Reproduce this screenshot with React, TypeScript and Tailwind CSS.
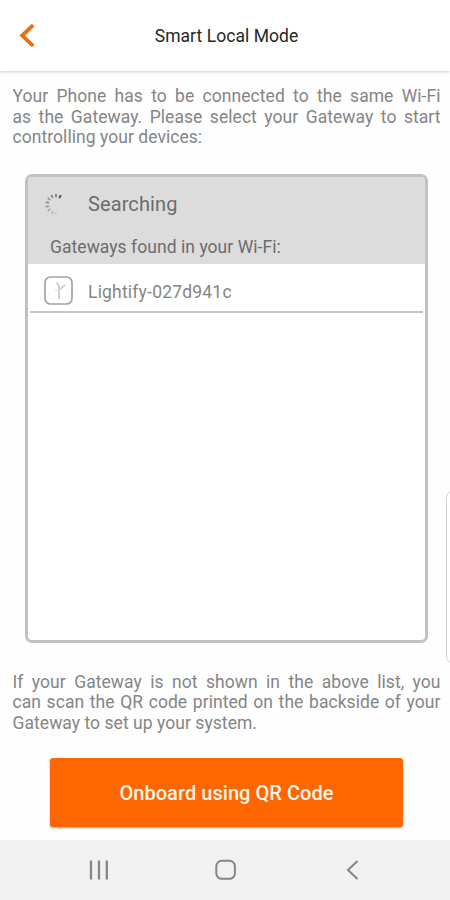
const ticks = [
  { angle: 180, color: '#cfcfcf' },
  { angle: 205, color: '#bdbdbd' },
  { angle: 232, color: '#a8a8a8' },
  { angle: 257, color: '#9c9c9c' },
  { angle: 283, color: '#8e8e8e' },
  { angle: 308, color: '#989898' },
  { angle: 334, color: '#848484' },
  { angle: 0, color: '#787878' },
  { angle: 27, color: '#404040' },
];

const introLines = [
  'Your Phone has to be connected to the same Wi-Fi',
  'as the Gateway. Please select your Gateway to start',
  'controlling your devices:',
];

const helpLines = [
  'If your Gateway is not shown in the above list, you',
  'can scan the QR code printed on the backside of your',
  'Gateway to set up your system.',
];

function Header() {
  return (
    <header className="flex h-[71px] shrink-0 items-center bg-white shadow-[0_1px_3px_rgba(0,0,0,0.2)]">
      <button aria-label="Back" className="ml-[18px] w-[18px]">
        <svg width="18" height="28" viewBox="0 0 18 28" fill="none">
          <path d="M15.2 3.2 4.2 13.5l11 10.5" stroke="#f26a0a" strokeWidth="3.8" />
        </svg>
      </button>
      <h1 className="mr-9 flex-1 pl-[3px] pt-px text-center text-[17.5px] tracking-[0.05px] text-[#262626]">Smart Local Mode</h1>
    </header>
  );
}

function Paragraph({ lines }: { lines: string[] }) {
  return (
    <p className="ml-[12.5px] w-[428px] text-[17.5px] leading-[20.5px] tracking-[0.05px] text-[#858585]">
      {lines.map((line, i) => (
        <span
          key={line}
          className={`block whitespace-nowrap text-justify ${i < lines.length - 1 ? '[text-align-last:justify]' : ''}`}
        >
          {line}
        </span>
      ))}
    </p>
  );
}

function Spinner() {
  return (
    <svg width="28" height="28" viewBox="-14 -14.5 28 28">
      {ticks.map((tick) => (
        <path
          key={tick.angle}
          d="M0-10.5v3.2"
          stroke={tick.color}
          strokeWidth="1.7"
          transform={`rotate(${tick.angle})`}
        />
      ))}
    </svg>
  );
}

function GatewayIcon() {
  return (
    <svg width="29" height="29" viewBox="0 0 29 29" fill="none">
      <rect x="1" y="1" width="27" height="27" rx="5.5" fill="#fff" stroke="#a3a3a3" strokeWidth="1.7" />
      <path d="M12.5 6.5 15 10v13M21 9l-6 5" stroke="#cfcfcf" strokeWidth="2" />
      <path d="M11 14.5h4" stroke="#e2e2e2" strokeWidth="1.5" />
    </svg>
  );
}

function GatewayList() {
  return (
    <section className="ml-[25px] mt-[26px] h-[469px] w-[403px] overflow-hidden rounded-[7px] border-[3px] border-[#c2c2c2] bg-white">
      <div className="h-[87px] bg-[#dcdcdc]">
        <div className="flex h-[54px] items-center pl-[14px]">
          <Spinner />
          <h2 className="ml-[18px] text-[20px] leading-6 tracking-[0.1px] text-[#6c6c6c]">Searching</h2>
        </div>
        <p className="pl-[22px] pt-[4px] text-[17.5px] leading-6 tracking-[0.05px] text-[#6c6c6c]">
          Gateways found in your Wi-Fi:
        </p>
      </div>
      <ul>
        <li className="mx-[2px] flex h-[49px] items-center border-b-2 border-[#c6c6c6] pl-[14px] pt-[6px]">
          <GatewayIcon />
          <span className="ml-[15px] pt-[4px] text-[17.5px] tracking-[0.2px] text-[#858585]">Lightify-027d941c</span>
        </li>
      </ul>
    </section>
  );
}

function NavigationBar() {
  return (
    <nav className="flex h-[60px] shrink-0 items-center bg-[#f1f1f1] text-[#858585]">
      <button aria-label="Recents" className="ml-[88px]">
        <svg width="22" height="22" viewBox="0 0 22 22" stroke="currentColor" strokeWidth="2.3">
          <path d="M3 1.5v19M11 1.5v19M18.8 1.5v19" />
        </svg>
      </button>
      <button aria-label="Home" className="ml-[104px]">
        <svg width="24" height="24" viewBox="0 0 24 24" fill="none" stroke="currentColor" strokeWidth="2">
          <rect x="2.3" y="2.8" width="18.6" height="18" rx="5.5" />
        </svg>
      </button>
      <button aria-label="Back" className="ml-[107px]">
        <svg width="16" height="22" viewBox="0 0 16 22" fill="none" stroke="currentColor" strokeWidth="2">
          <path d="M12.5 2 3 11l9.5 9" />
        </svg>
      </button>
    </nav>
  );
}

export default function App() {
  return (
    <div className="relative flex h-[900px] w-[450px] flex-col overflow-hidden bg-[#fefefe] font-['Roboto',sans-serif]">
      <Header />
      <main className="flex-1 pt-[15px]">
        <Paragraph lines={introLines} />
        <GatewayList />
        <div className="mt-[29px]">
          <Paragraph lines={helpLines} />
        </div>
        <button className="ml-[50px] mt-[25px] h-[69px] w-[353px] rounded-[3px] bg-[#ff6600] pt-px text-[20px] font-medium tracking-[0.05px] text-[#fff5e8] shadow-[0_1px_2px_rgba(0,0,0,0.35)]">
          Onboard using QR Code
        </button>
      </main>
      <NavigationBar />
      {/* Edge panel handle, mostly off screen */}
      <div className="absolute left-[445.5px] top-[490px] h-[174px] w-5 rounded-[8px] border-[1.5px] border-[#d6d6d6] bg-white" />
    </div>
  );
}
